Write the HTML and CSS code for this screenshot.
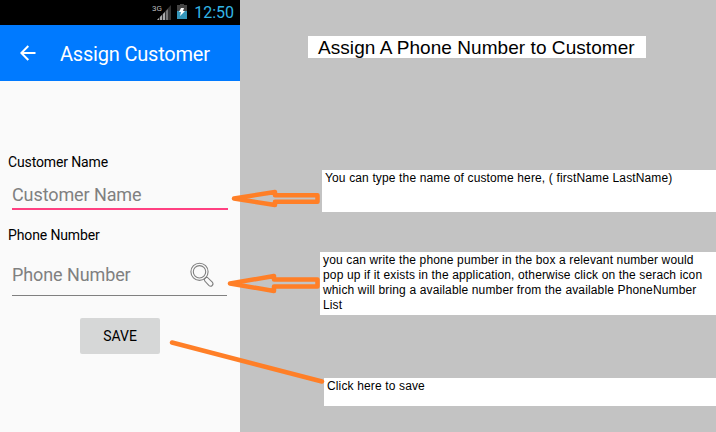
FILE: index.html
```html
<!DOCTYPE html>
<html lang="en">
<head>
<meta charset="utf-8">
<title>Assign Customer</title>
<link rel="stylesheet" href="styles.css">
</head>
<body>
<main class="guide">
  <section class="phone">
    <div class="status">
      <svg class="signal" width="20" height="18" viewBox="0 0 20 18">
        <path d="M5 16 19 1V16Z" fill="#333"/>
        <path d="M5 16 7 14V16ZM8 13 10 11V16H8ZM11 10 13 8V16H11Z" fill="#aaa"/>
        <path d="M14 7 16 5V16H14Z" fill="#777"/>
        <text x="0" y="7" class="network">3G</text>
      </svg>
      <svg class="battery" width="10" height="15" viewBox="0 0 10 15">
        <path d="M3 0H7V1H10V8H0V1H3Z" fill="#444"/>
        <path d="M0 7H10V15H0Z" fill="#3595b9"/>
        <path d="M4 4H7L6 7H8L3 12 4 8H2Z" fill="#fff"/>
      </svg>
      <span class="clock">12:50</span>
    </div>
    <header class="appbar">
      <svg class="back" width="16" height="16" viewBox="0 0 16 16"><path d="M15.5 8H1.5M8.3 1 1.3 8l7 7"/></svg>
      <h1 class="appbar-title">Assign Customer</h1>
    </header>
    <form class="form">
      <div class="label">Customer Name</div>
      <div class="field field-active"><span class="hint">Customer Name</span></div>
      <div class="label label-phone">Phone Number</div>
      <div class="field field-phone">
        <span class="hint">Phone Number</span>
        <svg class="search" width="26" height="26" viewBox="0 0 26 26">
          <circle cx="10.5" cy="9.8" r="8.6"/><circle cx="10.5" cy="9.8" r="6.2"/>
          <path d="M15.3 17.2Q16.2 15.2 18.2 15.2L23.3 20Q24.8 22 23.2 23.5T19.8 23.3L15.8 19Z"/>
        </svg>
      </div>
      <button class="save" type="button">SAVE</button>
    </form>
  </section>
  <section class="notes">
    <h2 class="note-title">Assign A Phone Number to Customer</h2>
    <p class="note note-name">You can type the name of custome here, ( firstName LastName)</p>
    <p class="note note-phone">you can write the phone pumber in the box a relevant number would<br>pop up if it exists in the application, otherwise click on the serach icon<br>which will bring a available number from the available PhoneNumber<br>List</p>
    <p class="note note-save">Click here to save</p>
  </section>
  <svg class="arrows" width="716" height="432" viewBox="0 0 716 432">
    <path d="M234 198.5 275 192V195.3H317.5V201.7H275V205Z"/>
    <path d="M230 283.5 274 276V279.5H317.5V286.5H274V291Z"/>
    <path d="M172 342.5 322 381.5"/>
  </svg>
</main>
</body>
</html>
```
FILE: styles.css
```css
* { box-sizing: border-box; }
body { margin: 0; }
.guide {
  position: relative;
  display: flex;
  width: 716px;
  height: 432px;
  overflow: hidden;
  background: #c3c3c3;
}
.phone {
  width: 240px;
  background: #fafafa;
  font-family: Roboto, sans-serif;
}
.status {
  display: flex;
  height: 25px;
  padding: 4px 6px 0 0;
  justify-content: flex-end;
  background: #000;
}
.signal { margin-right: 5px; }
.network { font: 8px Roboto, sans-serif; fill: #bbb; }
.battery { margin-right: 7px; }
.clock {
  font-size: 16px;
  line-height: 17px;
  color: #33b5e5;
}
.appbar {
  display: flex;
  align-items: center;
  height: 56px;
  padding: 2px 0 0 20px;
  background: #007aff;
  color: #fff;
}
.back { margin: -3px 24px 0 0; fill: none; stroke: #fff; stroke-width: 2; }
.appbar-title {
  margin: 0;
  font-size: 20px;
  font-weight: 400;
  letter-spacing: -0.2px;
  white-space: nowrap;
}
.form { padding: 72px 12px 0; }
.label {
  margin-left: -4px;
  font-size: 14px;
  line-height: 18px;
  letter-spacing: -0.13px;
  color: #000;
}
.field {
  display: flex;
  align-items: center;
  height: 39px;
  padding-top: 10px;
  font-size: 18px;
  letter-spacing: -0.1px;
  color: #808080;
}
.field-active { border-bottom: 2px solid #ff4081; }
.label-phone { margin-top: 16px; }
.field-phone {
  width: 215px;
  height: 52px;
  padding-top: 10px;
  justify-content: space-between;
  border-bottom: 1px solid #808080;
}
.search { margin-right: 12px; fill: none; stroke: #808080; stroke-width: 1.1; }
.save {
  display: block;
  width: 80px;
  height: 36px;
  margin: 22px 0 0 68px;
  padding: 0;
  border: 0;
  border-radius: 2px;
  background: #d6d7d7;
  color: #000;
  font: 14px Roboto, sans-serif;
}
.notes { flex: 1; font-family: "Liberation Sans", sans-serif; color: #000; }
.note-title {
  width: 338px;
  height: 22px;
  margin: 36px 0 0 68px;
  padding-left: 10px;
  background: #fff;
  font-size: 19px;
  font-weight: 400;
  line-height: 23px;
  letter-spacing: 0.06px;
  white-space: nowrap;
}
.note {
  margin: 0;
  padding: 1px 0 0 3px;
  background: #fff;
  font-size: 12px;
  line-height: 15px;
  letter-spacing: 0.14px;
  white-space: nowrap;
}
.note-name { height: 42px; margin: 112px 0 0 82px; }
.note-phone { height: 63px; margin: 40px 0 0 80px; }
.note-save { height: 28px; margin: 63px 0 0 84px; }
.arrows {
  position: absolute;
  inset: 0;
  fill: none;
  stroke: #ff7f27;
  stroke-width: 4.5;
  stroke-linecap: round;
  stroke-linejoin: round;
}
```
